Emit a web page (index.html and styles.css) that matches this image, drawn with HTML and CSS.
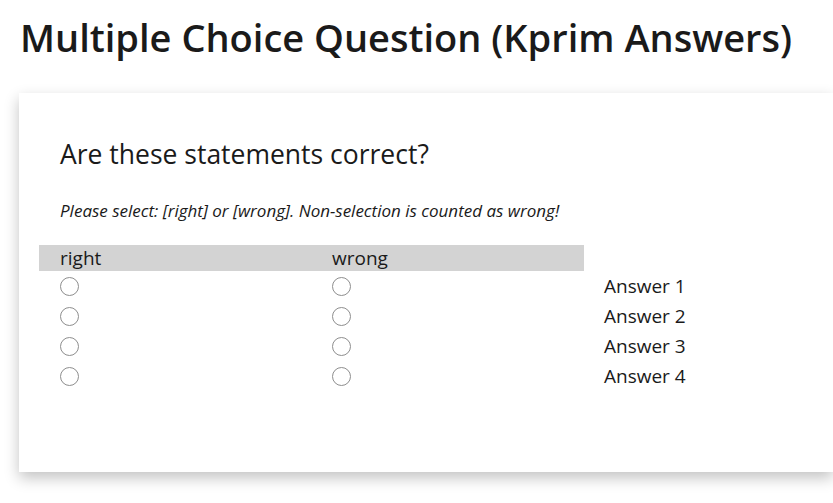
FILE: index.html
```html
<!DOCTYPE html>
<html>
<head>
<meta charset="utf-8">
<link rel="stylesheet" href="styles.css">
</head>
<body>
<h1 class="title">Multiple Choice Question (Kprim Answers)</h1>
<div class="card">
  <h2 class="question">Are these statements correct?</h2>
  <p class="hint">Please select: [right] or [wrong]. Non-selection is counted as wrong!</p>
  <table class="kprim">
    <colgroup>
      <col class="c1"><col class="c2"><col class="c3">
    </colgroup>
    <thead>
      <tr><th>right</th><th>wrong</th></tr>
    </thead>
    <tbody>
      <tr><td><span class="radio"></span></td><td><span class="radio"></span></td><td class="ans">Answer 1</td></tr>
      <tr><td><span class="radio"></span></td><td><span class="radio"></span></td><td class="ans">Answer 2</td></tr>
      <tr><td><span class="radio"></span></td><td><span class="radio"></span></td><td class="ans">Answer 3</td></tr>
      <tr><td><span class="radio"></span></td><td><span class="radio"></span></td><td class="ans">Answer 4</td></tr>
    </tbody>
  </table>
</div>
</body>
</html>
```
FILE: styles.css
```css
html, body {
  margin: 0;
  padding: 0;
  background: #ffffff;
  overflow: hidden;
}
body {
  font-family: "Open Sans", "Noto Sans", sans-serif;
  color: #1a1a1a;
  height: 503px;
}
.title {
  margin: 0;
  padding: 10px 0 0 20px;
  font-size: 38px;
  font-weight: 600;
  line-height: 54px;
  white-space: nowrap;
}
.card {
  margin: 29px 0 0 19px;
  height: 379px;
  box-sizing: border-box;
  padding: 43px 20px 0 20px;
  background: #fff;
  box-shadow: 0 6px 14px rgba(0, 0, 0, 0.24);
}
.question {
  margin: 0;
  padding-left: 21px;
  font-size: 26.5px;
  font-weight: 400;
  line-height: 36px;
}
.hint {
  margin: 27px 0 0 0;
  padding-left: 21px;
  font-size: 17px;
  font-style: italic;
  line-height: 24px;
}
.kprim {
  margin-top: 22px;
  border-collapse: collapse;
  table-layout: fixed;
  width: 760px;
  font-size: 19px;
}
.c1 { width: 272px; }
.c2 { width: 273px; }
.kprim th {
  background: #d3d3d3;
  text-align: left;
  font-weight: 400;
  padding: 0 0 0 21px;
  height: 26px;
  line-height: 26px;
}
.kprim td {
  padding: 0 0 0 21px;
  height: 30px;
  line-height: 30px;
  vertical-align: middle;
}
.kprim td.ans {
  padding-left: 20px;
}
.radio {
  display: block;
  width: 19px;
  height: 19px;
  border: 1px solid #8e8e8e;
  border-radius: 50%;
  box-sizing: border-box;
}
```
